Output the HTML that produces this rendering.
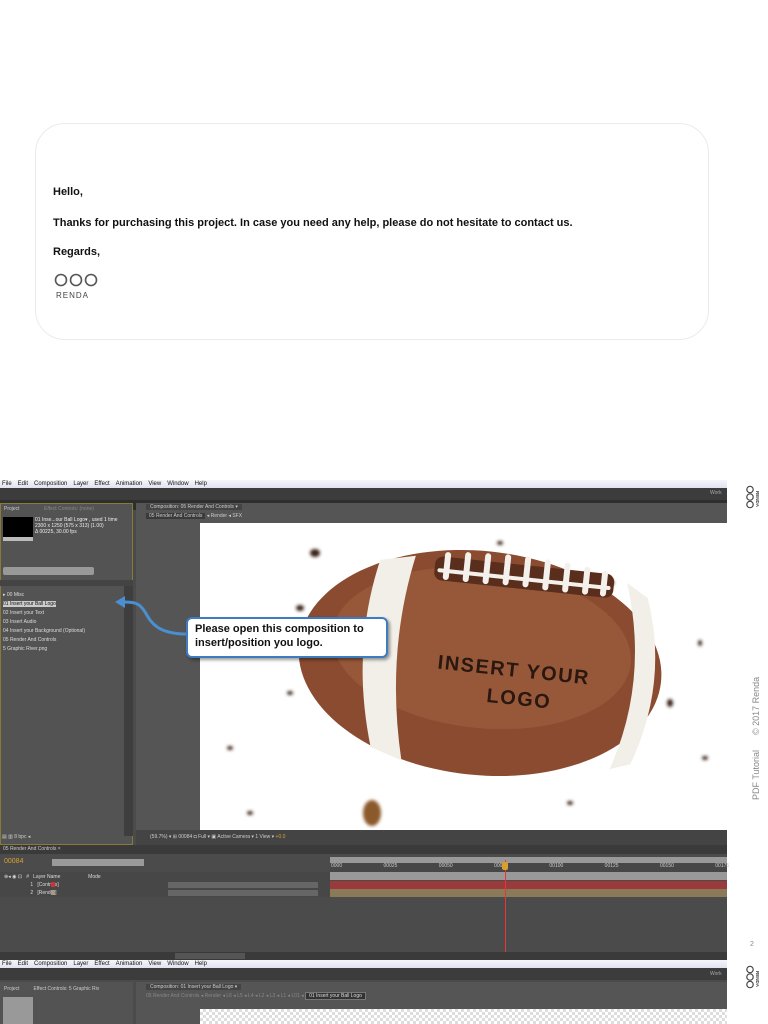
<!DOCTYPE html>
<html><head><meta charset="utf-8"><style>
*{margin:0;padding:0;box-sizing:border-box}
body{width:768px;height:1024px;background:#fff;position:relative;overflow:hidden;font-family:"Liberation Sans",sans-serif}
.a{position:absolute}
.card{left:35px;top:123px;width:674px;height:217px;border:1px solid #ebebeb;border-radius:30px}
.t{position:absolute;left:53px;font-weight:bold;font-size:11px;color:#111}
.menu{font-size:6px;color:#111;background:linear-gradient(#f4f5fa,#dfe3ee);height:8px;line-height:8px;padding-left:2px;white-space:nowrap}
.menu span{margin-right:6px}
.tl{font-size:5px;color:#ccc;white-space:nowrap}
</style></head><body>
<div class="a card"></div>
<div class="t" style="top:186px">Hello,</div>
<div class="t" style="top:217px">Thanks for purchasing this project. In case you need any help, please do not hesitate to contact us.</div>
<div class="t" style="top:246px">Regards,</div>
<svg class="a" style="left:54px;top:273px" width="46" height="28"><g fill="none" stroke="#555" stroke-width="1.6"><circle cx="7" cy="7" r="5.5"/><circle cx="22" cy="7" r="5.5"/><circle cx="37" cy="7" r="5.5"/></g><text x="2" y="25" font-size="8" fill="#444" font-family="Liberation Sans" letter-spacing="1">RENDA</text></svg>

<!-- screenshot 1 -->
<div class="a" style="left:0;top:480px;width:727px;height:480px;background:#4b4b4b"></div>
<div class="a menu" style="left:0;top:480px;width:727px"><span>File</span><span>Edit</span><span>Composition</span><span>Layer</span><span>Effect</span><span>Animation</span><span>View</span><span>Window</span><span>Help</span></div>
<div class="a" style="left:0;top:488px;width:727px;height:12px;background:#3c3c3c"></div>
<div class="a" style="left:710px;top:490px;font-size:5px;color:#aaa">Work</div>
<div class="a" style="left:0;top:500px;width:727px;height:10px;background:#2e2e2e"></div>
<div class="a" style="left:0;top:503px;width:133px;height:342px;background:#535353;border:1px solid #8a7a3a"></div>
<div class="a tl" style="left:4px;top:506px">Project</div>
<div class="a tl" style="left:44px;top:506px;color:#888">Effect Controls: (none)</div>
<div class="a" style="left:3px;top:517px;width:30px;height:24px;background:#000;border-bottom:4px solid #bbb"></div>
<div class="a tl" style="left:35px;top:517px;color:#eee;line-height:6px">01 Inse...our Ball Logo▾ , used 1 time<br>2300 x 1250 (575 x 313) (1.00)<br>Δ 00225, 30.00 fps</div>
<div class="a" style="left:3px;top:567px;width:91px;height:8px;background:#999;border-radius:2px"></div>
<div class="a" style="left:0;top:580px;width:133px;height:6px;background:#444"></div>
<div class="a tl" style="left:3px;top:591px;line-height:9px;color:#ddd">▸ 00 Misc<br><span style="background:#ccc;color:#111">01 Insert your Ball Logo</span><br>02 Insert your Text<br>03 Insert Audio<br>04 Insert your Background (Optional)<br>05 Render And Controls<br>5 Graphic River.png</div>
<div class="a" style="left:124px;top:586px;width:9px;height:250px;background:#3e3e3e"></div>
<div class="a" style="left:136px;top:503px;width:591px;height:327px;background:#555"></div>
<div class="a tl" style="left:146px;top:504px;background:#444;padding:0 4px">Composition: 05 Render And Controls ▾</div>
<div class="a tl" style="left:146px;top:513px"><span style="background:#3a3a3a;padding:0 3px">05 Render And Controls</span> ◂ Render ◂ SFX</div>
<div class="a" style="left:200px;top:523px;width:527px;height:307px;background:#fff"></div>
<svg class="a" style="left:200px;top:523px" width="527" height="307">
<defs><filter id="b"><feGaussianBlur stdDeviation="1.5"/></filter></defs>
<g fill="#3a2418" filter="url(#b)"><ellipse cx="115" cy="30" rx="5" ry="4"/><ellipse cx="410" cy="60" rx="4" ry="3"/><ellipse cx="100" cy="85" rx="4" ry="3"/><ellipse cx="172" cy="290" rx="9" ry="13" fill="#8b5a2b"/><ellipse cx="30" cy="225" rx="3" ry="2"/><ellipse cx="470" cy="180" rx="3" ry="4"/><ellipse cx="505" cy="235" rx="3" ry="2"/><ellipse cx="90" cy="170" rx="3" ry="2"/><ellipse cx="50" cy="290" rx="3" ry="2"/><ellipse cx="370" cy="280" rx="3" ry="2"/><ellipse cx="300" cy="20" rx="3" ry="2"/><ellipse cx="500" cy="120" rx="2" ry="3"/><ellipse cx="230" cy="170" rx="4" ry="5"/><ellipse cx="240" cy="190" rx="3" ry="4"/></g>
<g transform="rotate(6 280 140)"><ellipse cx="280" cy="140" rx="182" ry="112" fill="#8a4b30"/><ellipse cx="280" cy="125" rx="150" ry="80" fill="#a0603f" opacity=".6"/>
<path d="M170 48 Q150 140 180 235 L212 245 Q185 140 205 40Z" fill="#f2eee8"/><path d="M418 45 Q450 140 420 232 L440 225 Q470 140 440 58Z" fill="#f2eee8"/>
<rect x="225" y="38" width="180" height="24" rx="8" fill="#5a2e1c"/>
<g stroke="#f4f1ec" stroke-width="6" stroke-linecap="round"><path d="M237 36v22M257 34v24M277 33v25M297 32v25M317 32v25M337 33v25M357 34v24M377 36v22M395 38v20"/><path d="M230 52h170" stroke-width="4"/></g>
<text x="238" y="150" font-size="20" font-weight="bold" fill="#2a1810" letter-spacing="1.5">INSERT YOUR</text><text x="290" y="178" font-size="20" font-weight="bold" fill="#2a1810" letter-spacing="1.5">LOGO</text></g>
</svg>
<div class="a" style="left:136px;top:830px;width:591px;height:15px;background:#444"></div>
<div class="a tl" style="left:150px;top:834px">(59.7%) ▾ ⊞ 00084 ◘ Full ▾ ▣ Active Camera ▾ 1 View ▾ <span style="color:#d9a030">+0.0</span></div>
<div class="a tl" style="left:2px;top:834px">▤ ▥ 8 bpc ◂</div>
<div class="a" style="left:0;top:845px;width:727px;height:9px;background:#3a3a3a"></div>
<div class="a tl" style="left:3px;top:846px">05 Render And Controls ×</div>
<div class="a" style="left:4px;top:858px;font-size:7px;color:#d9a030">00084</div>
<div class="a" style="left:52px;top:859px;width:92px;height:7px;background:#9a9a9a"></div>
<div class="a" style="left:330px;top:857px;width:397px;height:6px;background:#999"></div>
<div class="a" style="left:330px;top:863px;width:397px;height:9px;background:#474747"></div>
<div class="a tl" style="left:331px;top:863px;word-spacing:40px">0000 00025 00050 00075 00100 00125 00150 00175</div>
<div class="a" style="left:330px;top:872px;width:397px;height:8px;background:#999"></div>
<div class="a" style="left:330px;top:881px;width:397px;height:8px;background:#9a3a3a"></div>
<div class="a" style="left:330px;top:889px;width:397px;height:8px;background:#8a7a5a"></div>
<div class="a" style="left:505px;top:860px;width:1px;height:92px;background:#e33"></div>
<div class="a" style="left:502px;top:862px;width:6px;height:8px;background:#d9a030;border-radius:2px"></div>
<div class="a" style="left:0;top:872px;width:330px;height:25px;background:#474747"></div>
<div class="a tl" style="left:4px;top:873px;line-height:8px;color:#ddd">⊕◂ ◉ ⊡ &nbsp; # &nbsp; Layer Name &nbsp;&nbsp;&nbsp;&nbsp;&nbsp;&nbsp;&nbsp;&nbsp;&nbsp;&nbsp;&nbsp;&nbsp;&nbsp;&nbsp;&nbsp;&nbsp;&nbsp;&nbsp; Mode<br>&nbsp;&nbsp;&nbsp;&nbsp;&nbsp;&nbsp;&nbsp;&nbsp;&nbsp;&nbsp;&nbsp;&nbsp;&nbsp;&nbsp;&nbsp;&nbsp;&nbsp;&nbsp; 1 &nbsp; [Controls]<br>&nbsp;&nbsp;&nbsp;&nbsp;&nbsp;&nbsp;&nbsp;&nbsp;&nbsp;&nbsp;&nbsp;&nbsp;&nbsp;&nbsp;&nbsp;&nbsp;&nbsp;&nbsp; 2 &nbsp; [Render]</div>
<div class="a" style="left:51px;top:882px;width:4px;height:5px;background:#c33"></div>
<div class="a" style="left:51px;top:890px;width:4px;height:5px;background:#a98"></div>
<div class="a" style="left:168px;top:882px;width:150px;height:14px;background:repeating-linear-gradient(#666 0 6px,#474747 6px 8px)"></div>
<div class="a" style="left:0;top:952px;width:727px;height:8px;background:#3a3a3a"></div>
<div class="a" style="left:175px;top:953px;width:70px;height:6px;background:#555"></div>

<!-- screenshot 2 -->
<div class="a menu" style="left:0;top:960px;width:727px"><span>File</span><span>Edit</span><span>Composition</span><span>Layer</span><span>Effect</span><span>Animation</span><span>View</span><span>Window</span><span>Help</span></div>
<div class="a" style="left:0;top:968px;width:727px;height:56px;background:#4b4b4b"></div>
<div class="a" style="left:0;top:968px;width:727px;height:12px;background:#3c3c3c"></div>
<div class="a" style="left:710px;top:971px;font-size:5px;color:#aaa">Work</div>
<div class="a" style="left:0;top:982px;width:133px;height:42px;background:#535353"></div>
<div class="a tl" style="left:4px;top:986px">Project &nbsp;&nbsp;&nbsp;&nbsp;&nbsp;&nbsp;&nbsp;&nbsp; Effect Controls: 5 Graphic Riv</div>
<div class="a" style="left:3px;top:997px;width:30px;height:27px;background:#999"></div>
<div class="a" style="left:136px;top:982px;width:591px;height:42px;background:#555"></div>
<div class="a tl" style="left:146px;top:984px;background:#444;padding:0 4px">Composition: 01 Insert your Ball Logo ▾</div>
<div class="a tl" style="left:146px;top:993px;color:#888">05 Render And Controls ◂ Render ◂ L6 ◂ L5 ◂ L4 ◂ L2 ◂ L3 ◂ L1 ◂ L01 ◂ <span style="background:#333;color:#ddd;padding:0 3px;border:1px solid #777">01 Insert your Ball Logo</span></div>
<div class="a" style="left:200px;top:1009px;width:527px;height:15px;background:repeating-conic-gradient(#ddd 0 25%,#fff 0 50%) 0 0/6px 6px"></div>

<!-- callout -->
<svg class="a" style="left:95px;top:590px" width="100" height="60"><path d="M92 44 C60 44 55 30 50 22 C44 12 38 12 28 12" fill="none" stroke="#4a90d0" stroke-width="3"/><path d="M20 12 L30 6 L30 18Z" fill="#4a90d0"/></svg>
<div class="a" style="left:186px;top:617px;width:202px;height:41px;background:#fff;border:2px solid #3d7cc0;border-radius:6px;box-shadow:2px 2px 3px rgba(0,0,0,.4);font-weight:bold;font-size:11px;color:#111;padding:3px 0 0 7px;line-height:14px">Please open this composition to<br>insert/position you logo.</div>

<!-- sidebar -->
<svg class="a" style="left:744px;top:485px" width="20" height="26"><g fill="none" stroke="#444" stroke-width="1.2"><circle cx="6" cy="4.5" r="3.2"/><circle cx="6" cy="12" r="3.2"/><circle cx="6" cy="19.5" r="3.2"/></g><text transform="translate(12 6) rotate(90)" font-size="4.5" fill="#444" font-weight="bold" font-family="Liberation Sans">RENDA</text></svg>
<svg class="a" style="left:744px;top:965px" width="20" height="26"><g fill="none" stroke="#444" stroke-width="1.2"><circle cx="6" cy="4.5" r="3.2"/><circle cx="6" cy="12" r="3.2"/><circle cx="6" cy="19.5" r="3.2"/></g><text transform="translate(12 6) rotate(90)" font-size="4.5" fill="#444" font-weight="bold" font-family="Liberation Sans">RENDA</text></svg>
<div class="a" style="left:751px;top:800px;transform-origin:0 0;transform:rotate(-90deg);font-size:9px;color:#888;white-space:nowrap">PDF Tutorial &nbsp;&nbsp;&nbsp;&nbsp; © 2017 Renda</div>
<div class="a" style="left:750px;top:941px;font-size:7px;color:#888">2</div>
</body></html>
